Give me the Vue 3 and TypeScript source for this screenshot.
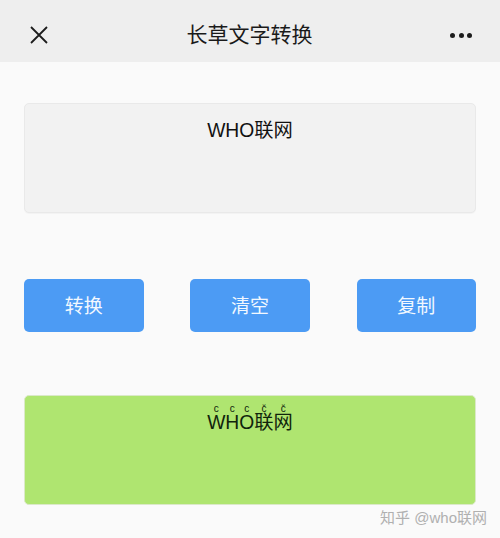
<script setup lang="ts">
interface MarkedChar {
  ch: string
  mark: string
}
const buttons: string[] = ['转换', '清空', '复制']
const source = 'WHO联网'
const output: MarkedChar[] = [
  { ch: 'W', mark: 'c' },
  { ch: 'H', mark: 'c' },
  { ch: 'O', mark: 'c' },
  { ch: '联', mark: 'c\u0306' },
  { ch: '网', mark: 'c\u0306' },
]
</script>

<template>
  <div class="page">
    <header class="bar">
      <svg class="close" width="20" height="20" viewBox="0 0 20 20" aria-label="关闭">
        <path d="M2 2 L18 18 M18 2 L2 18" stroke="#1c1c1c" stroke-width="1.8" fill="none" />
      </svg>
      <h1 class="title">长草文字转换</h1>
      <div class="more" aria-label="更多"><i></i><i></i><i></i></div>
    </header>
    <main class="content">
      <div class="box input">{{ source }}</div>
      <div class="actions">
        <button v-for="b in buttons" :key="b" class="btn" type="button">{{ b }}</button>
      </div>
      <div class="box result">
        <span v-for="c in output" :key="c.ch" class="ch">{{ c.ch }}<i class="accent">{{ c.mark }}</i></span>
      </div>
    </main>
    <span class="mark">知乎 @who联网</span>
  </div>
</template>

<style>
html, body { margin: 0; padding: 0; background: #fafafa; }
</style>

<style scoped>
.page {
  position: relative;
  width: 500px;
  height: 538px;
  overflow: hidden;
  background: #fafafa;
  font-family: "Liberation Sans", "Noto Sans CJK SC", sans-serif;
  color: #111;
}
.bar {
  display: flex;
  align-items: center;
  justify-content: space-between;
  height: 62px;
  padding: 8px 28px 0 29px;
  box-sizing: border-box;
  background: #eeeeee;
}
.title {
  margin: 0;
  font-size: 21px;
  font-weight: 400;
  color: #1a1a1a;
  line-height: 28px;
}
.close { display: block; }
.more { display: flex; gap: 3.5px; }
.more i {
  width: 5px;
  height: 5px;
  border-radius: 50%;
  background: #1c1c1c;
}
.content {
  display: flex;
  flex-direction: column;
  padding: 41px 24px 0;
}
.box {
  height: 110px;
  box-sizing: border-box;
  border-radius: 5px;
  padding-top: 14px;
  text-align: center;
  font-size: 19.3px;
  line-height: 26px;
}
.input {
  background: #f2f2f2;
  border: 1px solid #e9e9e9;
  box-shadow: 0 1px 1px rgba(0, 0, 0, 0.03);
}
.result {
  background: #afe570;
  border: 1px solid #dbe9c8;
  color: #10240c;
}
.ch { position: relative; }
.accent {
  position: absolute;
  left: 50%;
  top: -9px;
  transform: translateX(-50%);
  font-style: normal;
  font-size: 10px;
  line-height: 12px;
}
.actions {
  display: flex;
  justify-content: space-between;
  margin: 66px 0 63px;
}
.btn {
  width: 119.5px;
  height: 53px;
  padding: 0 0 2px;
  border: 0;
  border-radius: 5px;
  background: #4c9bf4;
  color: #f2f8ff;
  font: inherit;
  font-size: 19px;
}
.mark {
  position: absolute;
  right: 13px;
  top: 508px;
  font-size: 15px;
  line-height: 20px;
  color: #b0b0b0;
}
</style>
